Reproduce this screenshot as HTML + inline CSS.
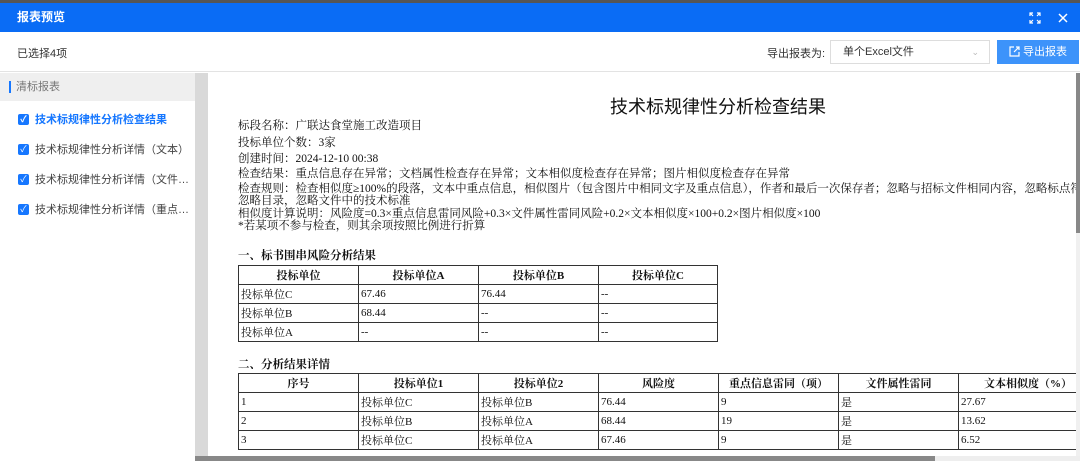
<!DOCTYPE html>
<html><head><meta charset="utf-8"><style>
*{margin:0;padding:0;box-sizing:border-box}
body{width:1080px;height:461px;overflow:hidden;background:#fff;font-family:"Liberation Sans","Noto Sans CJK SC",sans-serif;position:relative}
.top{position:absolute;left:0;top:0;width:1080px;height:3px;background:#555}
.hdr{position:absolute;left:0;top:3px;width:1080px;height:29px;background:#0a6cf5;color:#fff;font-size:12px;font-weight:bold;line-height:29px;padding-left:17px}
.tb{position:absolute;left:0;top:32px;width:1080px;height:40px;border-bottom:1px solid #e3e3e3;font-size:11px;color:#333}
.side{position:absolute;left:0;top:73px;width:195px;height:388px;background:#fff}
.gut{position:absolute;left:195px;top:73px;width:13px;height:388px;background:#d9d9d9}
.item{position:absolute;left:18px;font-size:11px;color:#444;display:flex;align-items:center;white-space:nowrap}
.item span{display:block;max-width:154px;overflow:hidden;text-overflow:ellipsis}
.cb{width:11px;height:11px;background:#1677ff;border-radius:2px;margin-right:6px;color:#fff;font-size:9px;line-height:11px;text-align:center;flex:none}
.rep{position:absolute;left:208px;top:73px;width:868px;height:383px;overflow:hidden;font-family:"Liberation Serif","Noto Serif CJK SC",serif;font-size:11.5px;color:#111}
.ln{position:absolute;left:30px;white-space:nowrap;line-height:12px}
table{position:absolute;border-collapse:collapse;font-size:11px}
td,th{border:1px solid #333;height:19px;padding:0 2px;text-align:left;font-weight:normal}
th{text-align:center;font-weight:bold}
</style></head><body>
<div class="top"></div>
<div class="hdr">报表预览
<svg style="position:absolute;left:1029px;top:9px" width="12" height="12" viewBox="0 0 12 12" fill="none" stroke="#fff" stroke-width="1.2"><path d="M1 4V1h3M1 1l3 3M8 1h3v3M11 1L8 4M1 8v3h3M1 11l3-3M8 11h3V8M11 11L8 8"/></svg>
<svg style="position:absolute;left:1058px;top:10px" width="10" height="10" viewBox="0 0 10 10" stroke="#fff" stroke-width="1.5"><path d="M1 1l8 8M9 1L1 9"/></svg></div>
<div class="tb">
<span style="position:absolute;left:17px;top:13px">已选择4项</span>
<span style="position:absolute;left:767px;top:13px">导出报表为:</span>
<div style="position:absolute;left:830px;top:8px;width:160px;height:24px;border:1px solid #ddd;padding-left:12px;line-height:22px">单个Excel文件<span style="position:absolute;right:10px;color:#bbb;font-size:9px">⌄</span></div>
<div style="position:absolute;left:997px;top:8px;width:82px;height:24px;background:#3d93fa;color:#fff;line-height:24px;padding-left:26px">导出报表
<svg style="position:absolute;left:12px;top:6px" width="11" height="11" viewBox="0 0 11 11" fill="none" stroke="#fff" stroke-width="1.2"><path d="M5 1H1v9h9V6M7 1h3v3M10 1L5 6"/></svg></div>
</div>
<div class="side">
<div style="position:absolute;left:0;top:0;width:195px;height:28px;background:#efefef;font-size:11px;color:#777;line-height:28px;padding-left:16px"><span style="position:absolute;left:9px;top:8px;width:2px;height:12px;background:#1677ff"></span>清标报表</div>
<div class="item" style="top:38px;color:#1677ff;font-weight:bold"><div class="cb">✓</div><span>技术标规律性分析检查结果</span></div>
<div class="item" style="top:68px"><div class="cb">✓</div><span>技术标规律性分析详情（文本）</span></div>
<div class="item" style="top:98px"><div class="cb">✓</div><span>技术标规律性分析详情（文件属性）</span></div>
<div class="item" style="top:128px"><div class="cb">✓</div><span>技术标规律性分析详情（重点信息）</span></div>
</div>
<div class="gut"></div>
<div class="rep">
<div style="position:absolute;left:402px;top:20px;font-size:18px;font-family:'Liberation Sans','Noto Sans CJK SC',sans-serif">技术标规律性分析检查结果</div>
<div class="ln" style="top:47px">标段名称：广联达食堂施工改造项目</div>
<div class="ln" style="top:64px">投标单位个数：3家</div>
<div class="ln" style="top:80px">创建时间：2024-12-10 00:38</div>
<div class="ln" style="top:95px">检查结果：重点信息存在异常；文档属性检查存在异常；文本相似度检查存在异常；图片相似度检查存在异常</div>
<div class="ln" style="top:110px">检查规则：检查相似度≥100%的段落，文本中重点信息，相似图片（包含图片中相同文字及重点信息），作者和最后一次保存者；忽略与招标文件相同内容，忽略标点符号</div>
<div class="ln" style="top:122px">忽略目录，忽略文件中的技术标准</div>
<div class="ln" style="top:135px">相似度计算说明：风险度=0.3×重点信息雷同风险+0.3×文件属性雷同风险+0.2×文本相似度×100+0.2×图片相似度×100</div>
<div class="ln" style="top:147px">*若某项不参与检查，则其余项按照比例进行折算</div>
<div class="ln" style="top:177px;font-weight:bold">一、标书围串风险分析结果</div>
<table style="left:30px;top:192px;width:480px">
<tr><th style="width:120px">投标单位</th><th style="width:120px">投标单位A</th><th style="width:120px">投标单位B</th><th>投标单位C</th></tr>
<tr><td>投标单位C</td><td>67.46</td><td>76.44</td><td>--</td></tr>
<tr><td>投标单位B</td><td>68.44</td><td>--</td><td>--</td></tr>
<tr><td>投标单位A</td><td>--</td><td>--</td><td>--</td></tr>
</table>
<div class="ln" style="top:286px;font-weight:bold">二、分析结果详情</div>
<table style="left:30px;top:300px;width:860px">
<tr><th style="width:120px">序号</th><th style="width:120px">投标单位1</th><th style="width:120px">投标单位2</th><th style="width:120px">风险度</th><th style="width:120px">重点信息雷同（项）</th><th style="width:120px">文件属性雷同</th><th>文本相似度（%）</th></tr>
<tr><td>1</td><td>投标单位C</td><td>投标单位B</td><td>76.44</td><td>9</td><td>是</td><td>27.67</td></tr>
<tr><td>2</td><td>投标单位B</td><td>投标单位A</td><td>68.44</td><td>19</td><td>是</td><td>13.62</td></tr>
<tr><td>3</td><td>投标单位C</td><td>投标单位A</td><td>67.46</td><td>9</td><td>是</td><td>6.52</td></tr>
</table>
</div>
<div style="position:absolute;left:1076px;top:73px;width:4px;height:383px;background:#f0f0f0"></div>
<div style="position:absolute;left:1076px;top:73px;width:4px;height:160px;background:#888"></div>
<div style="position:absolute;left:195px;top:456px;width:885px;height:5px;background:#eee"></div>
<div style="position:absolute;left:195px;top:456px;width:740px;height:5px;background:#888"></div>
</body></html>
